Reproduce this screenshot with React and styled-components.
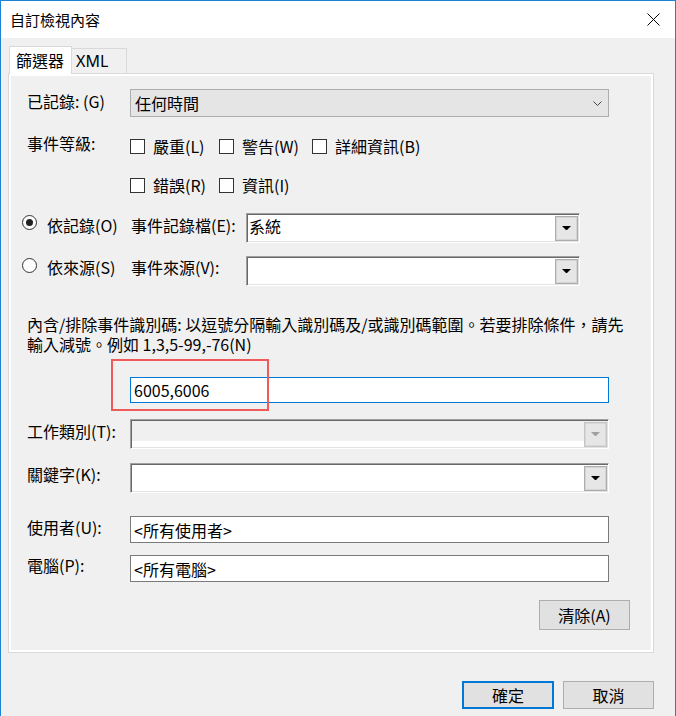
import React from "react";
import styled, { createGlobalStyle } from "styled-components";

const GlobalStyle = createGlobalStyle`
  html, body {
    margin: 0;
    padding: 0;
    background: #f0f0f0;
  }
  body {
    font-family: "Noto Sans CJK TC", "Noto Sans", sans-serif;
    font-size: 16px;
    color: #000;
  }
`;

const Window = styled.div`
  width: 676px;
  height: 716px;
  box-sizing: border-box;
  border: 1px solid #1883d7;
  border-bottom: none;
  background: #f0f0f0;
  display: flex;
  flex-direction: column;
  overflow: hidden;
`;

const TitleBar = styled.div`
  height: 37px;
  flex: none;
  background: #fff;
  display: flex;
  align-items: center;
  justify-content: space-between;
  padding: 0 15px 0 9px;
`;

const Title = styled.span`
  font-size: 15px;
  line-height: 20px;
`;

const Body = styled.div`
  display: flex;
  flex-direction: column;
  padding: 0 21px 0 7px;
`;

const TabRow = styled.div`
  display: flex;
  align-items: flex-start;
  height: 28px;
  margin-top: 8px;
  padding-left: 1px;
`;

const Tab = styled.div`
  box-sizing: border-box;
  position: relative;
  z-index: ${(p) => (p.$active ? 1 : 0)};
  width: ${(p) => (p.$active ? 63 : 55)}px;
  height: ${(p) => (p.$active ? 28 : 25)}px;
  margin-top: ${(p) => (p.$active ? 0 : 2)}px;
  background: ${(p) => (p.$active ? "#fff" : "#f0f0f0")};
  border: 1px solid #d9d9d9;
  border-bottom: none;
  border-left: ${(p) => (p.$active ? "1px solid #d9d9d9" : "none")};
  padding-left: ${(p) => (p.$active ? 6 : 4)}px;
  padding-top: ${(p) => (p.$active ? 3 : 2)}px;
  line-height: 20px;
  font-family: ${(p) => (p.$active ? "inherit" : '"Noto Sans", sans-serif')};
`;

const Panel = styled.div`
  box-sizing: border-box;
  width: 646px;
  height: 580px;
  margin-top: -1px;
  border: 1px solid #d9d9d9;
  box-shadow: inset 0 0 0 2px #fff;
  padding-left: 18px;
  display: flex;
  flex-direction: column;
`;

const Row = styled.div`
  display: flex;
  align-items: flex-start;
  margin-top: ${(p) => p.$mt}px;
  position: relative;
`;

const Label = styled.div`
  flex: none;
  width: ${(p) => p.$w}px;
  margin-top: ${(p) => p.$dy || 0}px;
  line-height: 20px;
  white-space: nowrap;
`;

const ModernSelect = styled.div`
  box-sizing: border-box;
  width: 479px;
  height: 28px;
  border: 1px solid #adadad;
  background: #e5e5e5;
  display: flex;
  align-items: center;
  justify-content: space-between;
  padding: 0 6px 0 4px;
  line-height: 20px;
`;

const SunkenCombo = styled.div`
  box-sizing: border-box;
  width: ${(p) => p.$w}px;
  height: 30px;
  border: 1px solid;
  border-color: #a0a0a0 #fff #fff #a0a0a0;
  box-shadow: inset 1px 1px 0 #696969, inset -1px -1px 0 #e3e3e3;
  background: ${(p) =>
    p.$disabled
      ? "linear-gradient(to bottom, #f0f0f0 calc(100% - 7px), #fff calc(100% - 7px))"
      : "#fff"};
  display: flex;
  padding: 1px 1px 1px 2px;
`;

const ComboText = styled.span`
  margin-top: 1px;
  line-height: 20px;
`;

const DropButton = styled.div`
  box-sizing: border-box;
  width: 23px;
  height: 25px;
  margin-left: auto;
  align-self: flex-end;
  border: 1px solid ${(p) => (p.$disabled ? "#c4c4c4" : "#adadad")};
  box-shadow: inset 0 0 0 1px ${(p) => (p.$disabled ? "#d8d8d8" : "#d4d4d4")};
  background: #e6e6e6;
  display: flex;
  align-items: center;
  justify-content: center;
  color: ${(p) => (p.$disabled ? "#a0a0a0" : "#000")};
`;

const TextBox = styled.div`
  box-sizing: border-box;
  width: 479px;
  height: ${(p) => p.$h || 27}px;
  border: 1px solid ${(p) => (p.$focused ? "#0078d7" : "#7a7a7a")};
  background: #fff;
  padding-left: 3px;
  display: flex;
  align-items: center;
  line-height: 20px;
`;

const Highlight = styled.div`
  position: absolute;
  left: 84px;
  top: -18px;
  width: 158px;
  height: 52px;
  box-sizing: border-box;
  border: 2px solid #ef5b5b;
  pointer-events: none;
`;

const CheckGrid = styled.div`
  display: grid;
  grid-template-columns: 89px 93px auto;
  grid-auto-rows: 24px;
  row-gap: 15px;
`;

const CheckItem = styled.label`
  display: flex;
  align-items: center;
  gap: 8px;
  line-height: 20px;
  white-space: nowrap;
`;

const Box = styled.span`
  box-sizing: border-box;
  width: 15px;
  height: 15px;
  border: 1px solid #333;
  background: #fff;
  flex: none;
`;

const RadioOption = styled.div`
  flex: none;
  width: 109px;
  margin-left: -5px;
  display: flex;
  align-items: flex-start;
  gap: 10px;
`;

const RadioCircle = styled.span`
  box-sizing: border-box;
  width: 15px;
  height: 15px;
  margin-top: 2px;
  border: 1px solid #333;
  border-radius: 50%;
  background: #fff;
  display: flex;
  align-items: center;
  justify-content: center;
  flex: none;

  &::after {
    content: "";
    width: 7px;
    height: 7px;
    border-radius: 50%;
    background: ${(p) => (p.$checked ? "#222" : "transparent")};
  }
`;

const Description = styled.div`
  margin-top: 28px;
  display: flex;
  flex-direction: column;
`;

const DescLine = styled.div`
  line-height: 20px;
  white-space: nowrap;
`;

const Button = styled.button`
  box-sizing: border-box;
  width: ${(p) => p.$w}px;
  height: ${(p) => p.$h}px;
  border: ${(p) => (p.$primary ? "2px solid #0078d7" : "1px solid #adadad")};
  background: #e1e1e1;
  font-family: inherit;
  font-size: 16px;
  line-height: 20px;
  color: #000;
  padding: 0;
`;

const ClearButton = styled(Button)`
  align-self: flex-end;
  margin: 18px 23px 0 0;
`;

const Footer = styled.div`
  display: flex;
  justify-content: flex-end;
  gap: 9px;
  margin-top: 28px;
`;

const Chevron = () => (
  <svg width="9" height="5" viewBox="0 0 9 5">
    <polyline points="0.5,0.5 4.5,4.5 8.5,0.5" fill="none" stroke="#444" strokeWidth="1" />
  </svg>
);

const Arrow = () => (
  <svg width="9" height="5" viewBox="0 0 9 5">
    <polygon points="0,0 9,0 5,4 4,4" fill="currentColor" />
  </svg>
);

const CloseIcon = () => (
  <svg width="13" height="13" viewBox="0 0 13 13">
    <path d="M0.5 0.5L12.5 12.5M12.5 0.5L0.5 12.5" stroke="#000" strokeWidth="1" />
  </svg>
);

function Combo({ w, text, disabled }) {
  return (
    <SunkenCombo $w={w} $disabled={disabled}>
      {text && <ComboText>{text}</ComboText>}
      <DropButton $disabled={disabled}>
        <Arrow />
      </DropButton>
    </SunkenCombo>
  );
}

function Check({ children }) {
  return (
    <CheckItem>
      <Box />
      {children}
    </CheckItem>
  );
}

export default function App() {
  return (
    <>
      <GlobalStyle />
      <Window>
        <TitleBar>
          <Title>自訂檢視內容</Title>
          <CloseIcon />
        </TitleBar>
        <Body>
          <TabRow>
            <Tab $active>篩選器</Tab>
            <Tab>XML</Tab>
          </TabRow>
          <Panel>
            <Row $mt={15}>
              <Label $w={103} $dy={2}>已記錄: (G)</Label>
              <ModernSelect>
                <span>任何時間</span>
                <Chevron />
              </ModernSelect>
            </Row>

            <Row $mt={17}>
              <Label $w={103} $dy={-1}>事件等級:</Label>
              <CheckGrid>
                <Check>嚴重(L)</Check>
                <Check>警告(W)</Check>
                <Check>詳細資訊(B)</Check>
                <Check>錯誤(R)</Check>
                <Check>資訊(I)</Check>
              </CheckGrid>
            </Row>

            <Row $mt={16}>
              <RadioOption>
                <RadioCircle $checked />
                <Label $dy={2}>依記錄(O)</Label>
              </RadioOption>
              <Label $w={115} $dy={2}>事件記錄檔(E):</Label>
              <Combo w={334} text="系統" />
            </Row>

            <Row $mt={13}>
              <RadioOption>
                <RadioCircle />
                <Label $dy={1}>依來源(S)</Label>
              </RadioOption>
              <Label $w={115} $dy={1}>事件來源(V):</Label>
              <Combo w={334} />
            </Row>

            <Description>
              <DescLine>內含/排除事件識別碼: 以逗號分隔輸入識別碼及/或識別碼範圍。若要排除條件，請先</DescLine>
              <DescLine>輸入減號。例如 1,3,5-99,-76(N)</DescLine>
            </Description>

            <Row $mt={23}>
              <Label $w={103} />
              <TextBox $focused $h={26}>6005,6006</TextBox>
              <Highlight />
            </Row>

            <Row $mt={16}>
              <Label $w={103} $dy={2}>工作類別(T):</Label>
              <Combo w={479} disabled />
            </Row>

            <Row $mt={14}>
              <Label $w={103} $dy={1}>關鍵字(K):</Label>
              <Combo w={479} />
            </Row>

            <Row $mt={23}>
              <Label $w={103} $dy={1}>使用者(U):</Label>
              <TextBox>&lt;所有使用者&gt;</TextBox>
            </Row>

            <Row $mt={12}>
              <Label $w={103}>電腦(P):</Label>
              <TextBox>&lt;所有電腦&gt;</TextBox>
            </Row>

            <ClearButton $w={91} $h={30}>清除(A)</ClearButton>
          </Panel>
          <Footer>
            <Button $primary $w={92} $h={28}>確定</Button>
            <Button $w={91} $h={28}>取消</Button>
          </Footer>
        </Body>
      </Window>
    </>
  );
}
